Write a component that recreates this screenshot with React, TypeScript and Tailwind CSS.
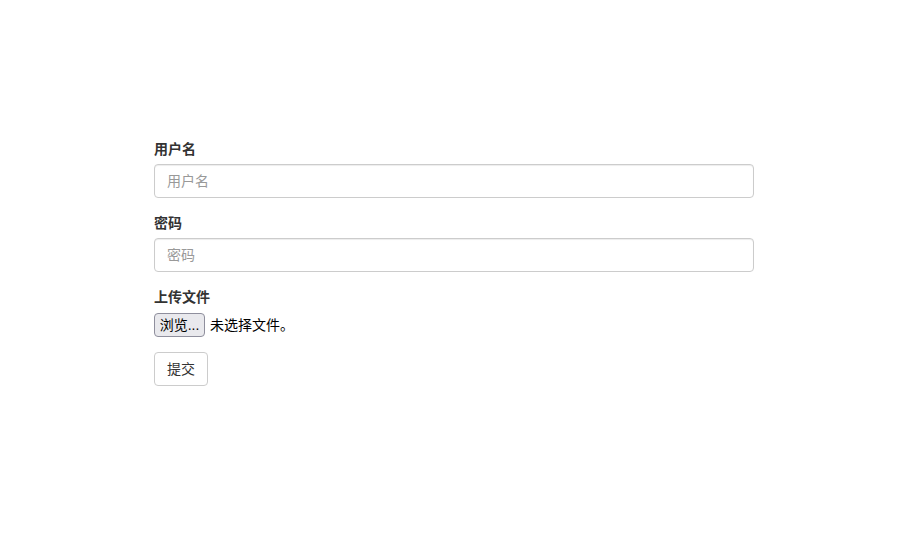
export default function App() {
    const font = { fontFamily: '"Helvetica Neue", "Liberation Sans", "Noto Sans CJK SC", sans-serif' }

    return (
        <div className="min-h-[540px] w-[900px] bg-white text-[14px] leading-[20px] text-[#333]" style={font}>
            <form className="ml-[154px] w-[600px] pt-[139px]" onSubmit={(e) => e.preventDefault()}>
                <div className="mb-[15px]">
                    <label className="mb-[5px] block font-bold">用户名</label>
                    <input
                        type="text"
                        placeholder="用户名"
                        className="block h-[34px] w-full rounded-[4px] border border-[#ccc] px-[12px] py-[6px] text-[14px] text-[#555] shadow-[inset_0_1px_1px_rgba(0,0,0,0.075)] outline-none placeholder:text-[#999]"
                    />
                </div>

                <div className="mb-[15px]">
                    <label className="mb-[5px] block font-bold">密码</label>
                    <input
                        type="password"
                        placeholder="密码"
                        className="block h-[34px] w-full rounded-[4px] border border-[#ccc] px-[12px] py-[6px] text-[14px] text-[#555] shadow-[inset_0_1px_1px_rgba(0,0,0,0.075)] outline-none placeholder:text-[#999]"
                    />
                </div>

                <div className="mb-[15px]">
                    <label className="mb-[5px] block font-bold">上传文件</label>
                    <div className="flex h-[25px] items-center">
                        <span className="flex h-[24px] w-[51px] items-center justify-center rounded-[4px] border border-[#8f8f9d] bg-[#e9e9ed] text-[14px] text-black">
                            浏览...
                        </span>
                        <span className="ml-[5px] text-[14px] text-black">未选择文件。</span>
                    </div>
                </div>

                <button
                    type="submit"
                    className="h-[34px] rounded-[4px] border border-[#ccc] bg-white px-[12px] py-[6px] text-[14px] text-[#333]"
                >
                    提交
                </button>
            </form>
        </div>
    )
}
